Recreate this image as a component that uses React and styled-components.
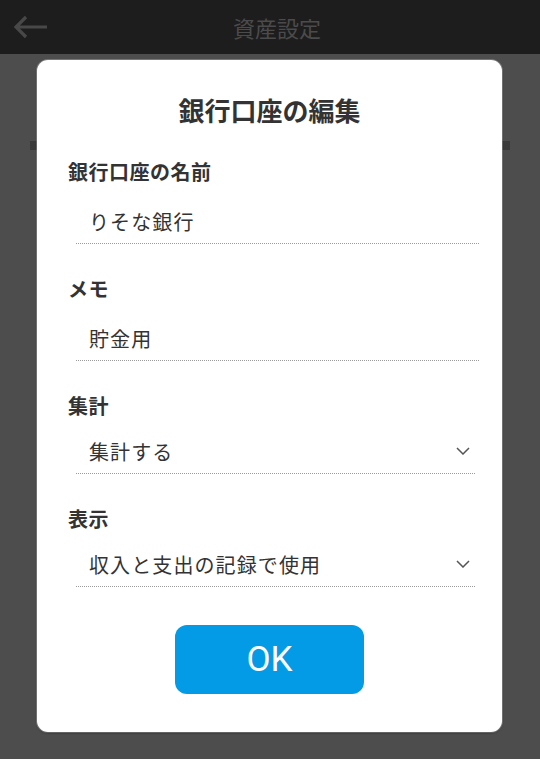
import React from "react";
import styled, { createGlobalStyle } from "styled-components";

const GlobalStyle = createGlobalStyle`
  html, body {
    margin: 0;
    padding: 0;
    background: #4d4d4d;
  }
  body {
    font-family: "Noto Sans CJK JP", "Noto Sans", sans-serif;
  }
`;

const Page = styled.div`
  position: relative;
  min-height: 100vh;
  background: #4d4d4d;
`;

const Header = styled.div`
  height: 54px;
  background: #1d1d1d;
  display: flex;
  align-items: center;
`;

const BackButton = styled.div`
  width: 64px;
  height: 54px;
  display: flex;
  align-items: center;
  padding-left: 14px;
  box-sizing: border-box;
`;

const HeaderTitle = styled.div`
  flex: 1;
  text-align: center;
  color: #4b4b4b;
  font-size: 22px;
  line-height: 54px;
`;

const HeaderSpacer = styled.div`
  width: 50px;
`;

const BackdropBar = styled.div`
  margin: 87px 30px 0;
  height: 9px;
  background: #3a3a3a;
`;

const Modal = styled.div`
  position: absolute;
  top: 60px;
  left: 37px;
  width: 465px;
  box-sizing: border-box;
  padding: 32px 23px 38px 31px;
  background: #fff;
  border-radius: 11px;
  box-shadow: 0 0 0 1px rgba(255, 255, 255, 0.25), 0 1px 2px rgba(0, 0, 0, 0.5);
  display: flex;
  flex-direction: column;
`;

const Title = styled.h2`
  margin: 0 0 30px;
  padding-right: 8px;
  text-align: center;
  font-size: 26px;
  line-height: 36px;
  font-weight: 700;
  color: #333;
`;

const Field = styled.div`
  display: flex;
  flex-direction: column;
  & + & {
    margin-top: 31px;
  }
`;

const Label = styled.div`
  font-size: 20px;
  line-height: 28px;
  font-weight: 700;
  letter-spacing: 0.5px;
  color: #333;
`;

const ValueRow = styled.div`
  margin-top: ${(p) => (p.$select ? 9 : 13)}px;
  margin-left: 8px;
  margin-right: ${(p) => (p.$select ? 4 : 0)}px;
  height: 44px;
  padding: 0 5px 0 13px;
  display: flex;
  align-items: center;
  justify-content: space-between;
  border-bottom: 1px dotted #9a9a9a;
`;

const Value = styled.span`
  font-size: 20px;
  letter-spacing: 1.1px;
  color: #333;
`;

const Footer = styled.div`
  display: flex;
  justify-content: center;
  margin-top: 38px;
  padding-right: 8px;
`;

const OkButton = styled.button`
  width: 189px;
  height: 69px;
  border: none;
  border-radius: 12px;
  background: #039be5;
  color: #fff;
  font-family: Roboto, "Noto Sans", sans-serif;
  font-size: 35px;
  font-weight: 400;
  cursor: pointer;
`;

const BackArrow = () => (
  <svg width="34" height="24" viewBox="0 0 34 24">
    <path
      d="M33 12H3M12 2L2 12l10 10"
      fill="none"
      stroke="#484848"
      strokeWidth="3.2"
    />
  </svg>
);

const Chevron = () => (
  <svg width="14" height="8" viewBox="0 0 14 8">
    <polyline points="1,1 7,7 13,1" fill="none" stroke="#555" strokeWidth="1.5" />
  </svg>
);

const fields = [
  { label: "銀行口座の名前", value: "りそな銀行" },
  { label: "メモ", value: "貯金用" },
  { label: "集計", value: "集計する", select: true },
  { label: "表示", value: "収入と支出の記録で使用", select: true },
];

export default function App() {
  return (
    <Page>
      <GlobalStyle />
      <Header>
        <BackButton>
          <BackArrow />
        </BackButton>
        <HeaderTitle>資産設定</HeaderTitle>
        <HeaderSpacer />
      </Header>
      <BackdropBar />
      <Modal>
        <Title>銀行口座の編集</Title>
        {fields.map((f) => (
          <Field key={f.label}>
            <Label>{f.label}</Label>
            <ValueRow $select={f.select}>
              <Value>{f.value}</Value>
              {f.select && <Chevron />}
            </ValueRow>
          </Field>
        ))}
        <Footer>
          <OkButton>OK</OkButton>
        </Footer>
      </Modal>
    </Page>
  );
}
